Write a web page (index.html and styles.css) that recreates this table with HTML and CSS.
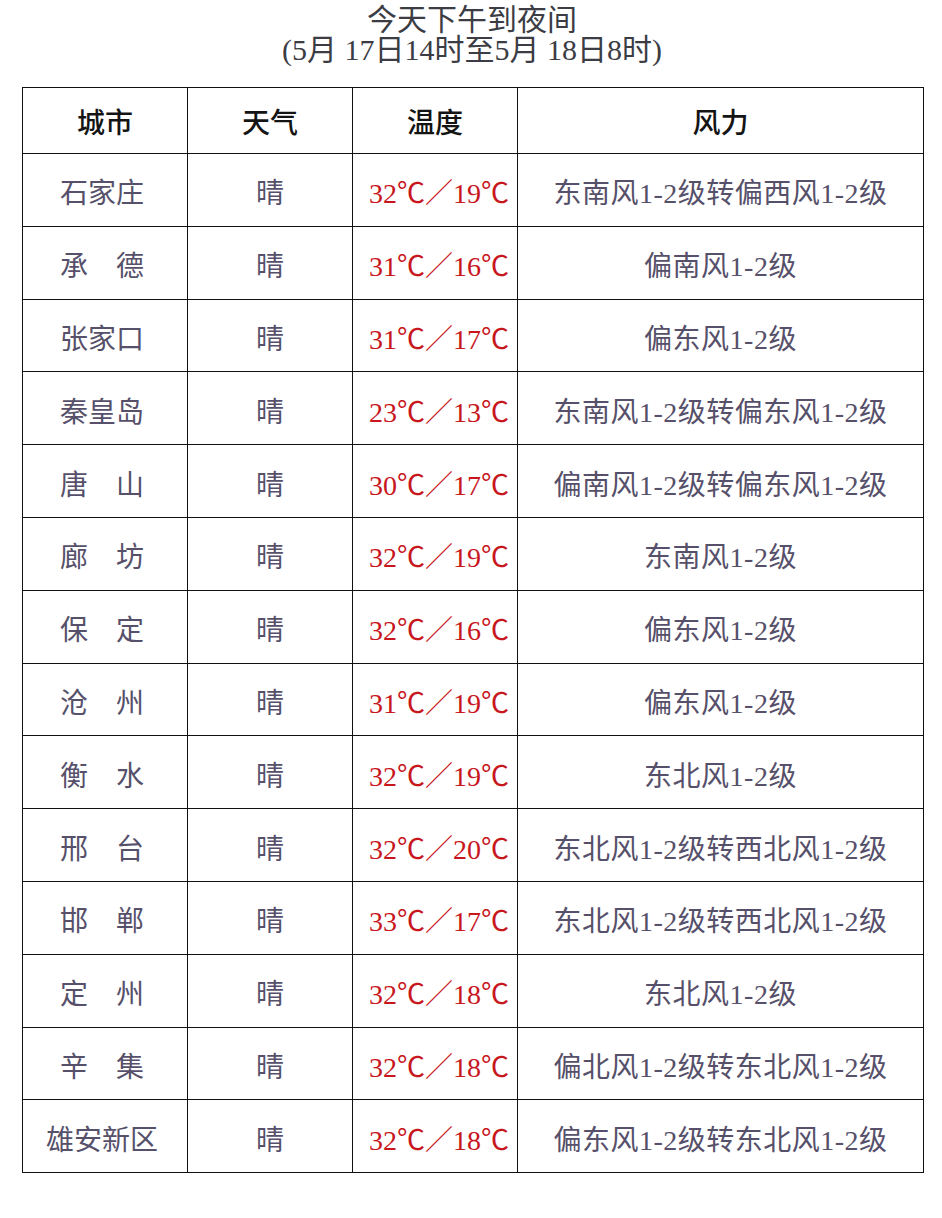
FILE: index.html
```html
<!DOCTYPE html>
<html lang="zh-CN">
<head>
<meta charset="utf-8">
<title>今天下午到夜间</title>
<link rel="stylesheet" href="styles.css">
</head>
<body>
<div class="page">
  <div class="title">
    <div class="title-line">今天下午到夜间</div>
    <div class="title-line">(5月 17日14时至5月 18日8时)</div>
  </div>
  <table class="forecast">
    <colgroup>
      <col class="c-city"><col class="c-wx"><col class="c-temp"><col class="c-wind">
    </colgroup>
    <thead>
      <tr class="head-row"><th>城市</th><th>天气</th><th>温度</th><th>风力</th></tr>
    </thead>
    <tbody>
      <tr><td class="city">石家庄</td><td>晴</td><td class="temp">32℃／19℃</td><td class="wind">东南风1-2级转偏西风1-2级</td></tr>
      <tr><td class="city">承　德</td><td>晴</td><td class="temp">31℃／16℃</td><td class="wind">偏南风1-2级</td></tr>
      <tr><td class="city">张家口</td><td>晴</td><td class="temp">31℃／17℃</td><td class="wind">偏东风1-2级</td></tr>
      <tr><td class="city">秦皇岛</td><td>晴</td><td class="temp">23℃／13℃</td><td class="wind">东南风1-2级转偏东风1-2级</td></tr>
      <tr><td class="city">唐　山</td><td>晴</td><td class="temp">30℃／17℃</td><td class="wind">偏南风1-2级转偏东风1-2级</td></tr>
      <tr><td class="city">廊　坊</td><td>晴</td><td class="temp">32℃／19℃</td><td class="wind">东南风1-2级</td></tr>
      <tr><td class="city">保　定</td><td>晴</td><td class="temp">32℃／16℃</td><td class="wind">偏东风1-2级</td></tr>
      <tr><td class="city">沧　州</td><td>晴</td><td class="temp">31℃／19℃</td><td class="wind">偏东风1-2级</td></tr>
      <tr><td class="city">衡　水</td><td>晴</td><td class="temp">32℃／19℃</td><td class="wind">东北风1-2级</td></tr>
      <tr><td class="city">邢　台</td><td>晴</td><td class="temp">32℃／20℃</td><td class="wind">东北风1-2级转西北风1-2级</td></tr>
      <tr><td class="city">邯　郸</td><td>晴</td><td class="temp">33℃／17℃</td><td class="wind">东北风1-2级转西北风1-2级</td></tr>
      <tr><td class="city">定　州</td><td>晴</td><td class="temp">32℃／18℃</td><td class="wind">东北风1-2级</td></tr>
      <tr><td class="city">辛　集</td><td>晴</td><td class="temp">32℃／18℃</td><td class="wind">偏北风1-2级转东北风1-2级</td></tr>
      <tr><td class="city">雄安新区</td><td>晴</td><td class="temp">32℃／18℃</td><td class="wind">偏东风1-2级转东北风1-2级</td></tr>
    </tbody>
  </table>
</div>
</body>
</html>
```
FILE: styles.css
```css
html, body {
  margin: 0;
  padding: 0;
  background: #ffffff;
}

body {
  font-family: "Liberation Serif", "Noto Sans CJK SC", serif;
  color: #56506a;
}

.page {
  padding: 5px 20px 0 22px;
}

.title {
  text-align: center;
  color: #3c3c44;
  font-size: 30px;
  line-height: 30px;
  margin-bottom: 22px;
}

.forecast {
  border-collapse: collapse;
  width: 901px;
  table-layout: fixed;
}

.c-city, .c-wx, .c-temp { width: 165px; }
.c-wind { width: 406px; }

.forecast tr {
  height: 72.8px;
}

.forecast tr.head-row {
  height: 66px;
}

.forecast th,
.forecast td {
  border: 1px solid #111111;
  padding: 0;
  text-align: center;
  vertical-align: middle;
  font-size: 28px;
  line-height: 32px;
  font-weight: normal;
}

.forecast th {
  color: #141414;
  font-weight: 500;
  padding-top: 6px;
}

.forecast td {
  padding-top: 9px;
}

.forecast td.city {
  padding-right: 6px;
}

.forecast td.temp {
  color: #c8161d;
  padding-left: 8px;
}

.forecast td.wind {
  letter-spacing: 0.5px;
}
```
